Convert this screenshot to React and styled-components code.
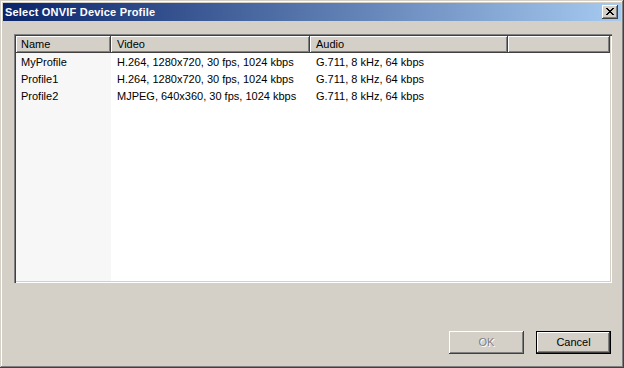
import React from "react";
import styled, { createGlobalStyle } from "styled-components";

const Global = createGlobalStyle`
  html, body { margin: 0; padding: 0; background: #d4d0c8; }
  body { font-family: "Liberation Sans", Arial, sans-serif; font-size: 11px; }
  * { box-sizing: border-box; }
`;

const Window = styled.div`
  width: 624px;
  height: 368px;
  padding: 3px;
  background: #d4d0c8;
  display: flex;
  flex-direction: column;
  box-shadow: inset -1px -1px #404040, inset 1px 1px #d4d0c8,
    inset -2px -2px #808080, inset 2px 2px #ffffff;
`;

const TitleBar = styled.div`
  height: 18px;
  flex: none;
  display: flex;
  align-items: center;
  padding: 0 3px 0 2px;
  background: linear-gradient(to right, #0a246a, #a6caf0);
`;

const Title = styled.span`
  flex: 1;
  color: #fff;
  font-weight: bold;
  font-size: 11px;
  letter-spacing: 0.2px;
  font-family: "Liberation Sans", Arial, sans-serif;
  white-space: nowrap;
`;

const CloseButton = styled.div`
  width: 16px;
  height: 14px;
  background: #d4d0c8;
  display: flex;
  align-items: center;
  justify-content: center;
  box-shadow: inset -1px -1px #404040, inset 1px 1px #ffffff,
    inset -2px -2px #808080;
  svg { display: block; margin: 0 0 1px 0; }
`;

const Body = styled.div`
  flex: 1;
  display: flex;
  flex-direction: column;
  padding: 13px 10px 11px 11px;
`;

const ListBox = styled.div`
  height: 249px;
  width: 598px;
  flex: none;
  padding: 2px;
  display: flex;
  flex-direction: column;
  box-shadow: inset 1px 1px #808080, inset 2px 2px #404040,
    inset -1px -1px #ffffff, inset -2px -2px #d4d0c8;
  background: #d4d0c8;
`;

const Columns = "95px 199px 198px 1fr";

const HeaderRow = styled.div`
  display: grid;
  grid-template-columns: ${Columns};
  height: 17px;
  flex: none;
`;

const HeaderCell = styled.div`
  background: #d4d0c8;
  display: flex;
  align-items: center;
  padding-left: ${(p) => (p.$first ? 5 : 6)}px;
  padding-bottom: 1px;
  color: #000;
  white-space: nowrap;
  box-shadow: inset -1px -1px #404040, inset 1px 1px #ffffff,
    inset -2px -2px #808080;
`;

const Rows = styled.div`
  flex: 1;
  background: linear-gradient(to right, #f7f7f7 95px, #ffffff 95px);
`;

const Row = styled.div`
  display: grid;
  grid-template-columns: ${Columns};
  height: 17px;
`;

const Cell = styled.div`
  display: flex;
  align-items: center;
  padding-left: ${(p) => (p.$first ? 5 : 6)}px;
  color: #000;
  white-space: nowrap;
`;

const ButtonRow = styled.div`
  margin-top: 48px;
  display: flex;
  justify-content: flex-end;
  gap: 12px;
`;

const Button = styled.div`
  width: 75px;
  height: 23px;
  display: flex;
  align-items: center;
  justify-content: center;
  background: #d4d0c8;
  font-size: 11px;
  color: ${(p) => (p.$disabled ? "#808080" : "#000")};
  text-shadow: ${(p) => (p.$disabled ? "1px 1px #ffffff" : "none")};
  border: ${(p) => (p.$default ? "1px solid #000" : "none")};
  box-shadow: inset -1px -1px #404040, inset 1px 1px #ffffff,
    inset -2px -2px #808080;
  padding-bottom: 1px;
`;

const rows = [
  ["MyProfile", "H.264, 1280x720, 30 fps, 1024 kbps", "G.711, 8 kHz, 64 kbps"],
  ["Profile1", "H.264, 1280x720, 30 fps, 1024 kbps", "G.711, 8 kHz, 64 kbps"],
  ["Profile2", "MJPEG, 640x360, 30 fps, 1024 kbps", "G.711, 8 kHz, 64 kbps"],
];

const CloseGlyph = () => {
  const px = [
    [0, 0], [1, 0], [6, 0], [7, 0],
    [1, 1], [2, 1], [5, 1], [6, 1],
    [2, 2], [3, 2], [4, 2], [5, 2],
    [3, 3], [4, 3],
    [2, 4], [3, 4], [4, 4], [5, 4],
    [1, 5], [2, 5], [5, 5], [6, 5],
    [0, 6], [1, 6], [6, 6], [7, 6],
  ];
  return (
    <svg width="8" height="7" viewBox="0 0 8 7" shapeRendering="crispEdges">
      {px.map(([x, y], i) => (
        <rect key={i} x={x} y={y} width="1" height="1" fill="#000" />
      ))}
    </svg>
  );
};

export default function App() {
  return (
    <>
      <Global />
      <Window>
        <TitleBar>
          <Title>Select ONVIF Device Profile</Title>
          <CloseButton>
            <CloseGlyph />
          </CloseButton>
        </TitleBar>
        <Body>
          <ListBox>
            <HeaderRow>
              <HeaderCell $first>Name</HeaderCell>
              <HeaderCell>Video</HeaderCell>
              <HeaderCell>Audio</HeaderCell>
              <HeaderCell />
            </HeaderRow>
            <Rows>
              {rows.map((r) => (
                <Row key={r[0]}>
                  <Cell $first>{r[0]}</Cell>
                  <Cell>{r[1]}</Cell>
                  <Cell>{r[2]}</Cell>
                  <Cell />
                </Row>
              ))}
            </Rows>
          </ListBox>
          <ButtonRow>
            <Button $disabled>OK</Button>
            <Button $default>Cancel</Button>
          </ButtonRow>
        </Body>
      </Window>
    </>
  );
}
